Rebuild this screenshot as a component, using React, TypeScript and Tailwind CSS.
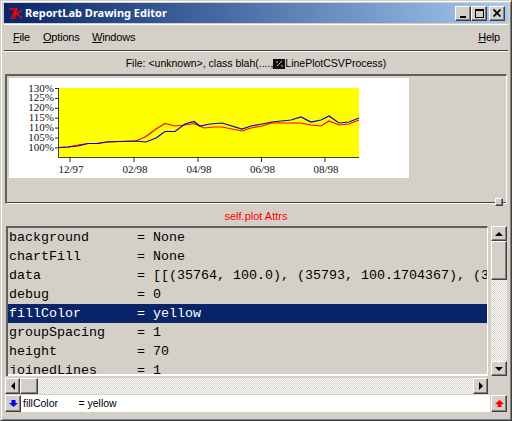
import type { ReactNode } from "react";

const raised = "border border-t-white border-l-white border-r-[#404040] border-b-[#404040] bg-[#d4d0c8] shadow-[inset_-1px_-1px_0_#808080]";
const dither = "bg-[repeating-conic-gradient(#d4d0c8_0_25%,#ffffff_0_50%)] bg-[length:2px_2px]";

const rows = [
  { name: "background", value: "None" },
  { name: "chartFill", value: "None" },
  { name: "data", value: "[[(35764, 100.0), (35793, 100.1704367), (3" },
  { name: "debug", value: "0" },
  { name: "fillColor", value: "yellow", selected: true },
  { name: "groupSpacing", value: "1" },
  { name: "height", value: "70" },
  { name: "joinedLines", value: "1" },
];

const blueLine = "59,147.5 68,147 78,146 88,143.5 97,143.5 107,142 117,141.5 136,141 146,142 156,138 165,131.5 175,131.5 185,124 194,121.5 200,126 210,124 222,123 242,129 251,126 262,124 272,122 291,120 301,117 311,122 321,120 329,116 339,123 349,122 359,118";
const redLine = "59,147.5 68,147 78,145 88,143.5 97,143.5 107,142 136,141 146,136.5 156,129 165,123.5 175,126 185,125 194,123.5 204,128 214,127 222,127 242,131 251,128 262,126 272,123 291,123 301,123 311,125 321,126 329,121 339,125 349,124 359,120";

function Chart() {
  const yLabels = ["130%", "125%", "120%", "115%", "110%", "105%", "100%"];
  const xLabels = [
    { x: 70, label: "12/97" },
    { x: 134, label: "02/98" },
    { x: 198, label: "04/98" },
    { x: 261.5, label: "06/98" },
    { x: 325, label: "08/98" },
  ];
  return (
    <svg width="400" height="100" viewBox="9 78 400 100" className="block bg-white">
      <rect x="59" y="88" width="300" height="69" fill="#ffff00" />
      <path d="M58.5 88V157.5H359" stroke="#404020" strokeWidth="1" fill="none" />
      {yLabels.map((label, i) => (
        <g key={label}>
          <line x1="55" x2="59" y1={88.5 + i * 9.9} y2={88.5 + i * 9.9} stroke="#202020" />
          <text x="54" y={91.5 + i * 9.9} textAnchor="end" fontSize="11" fontFamily="'Liberation Serif', serif" fill="#111">
            {label}
          </text>
        </g>
      ))}
      {xLabels.map((t) => (
        <g key={t.label}>
          <line x1={t.x} x2={t.x} y1="157" y2="162" stroke="#202020" />
          <text x={t.x + 1} y="173" textAnchor="middle" fontSize="11" fontFamily="'Liberation Serif', serif" fill="#111">
            {t.label}
          </text>
        </g>
      ))}
      <polyline points={redLine} fill="none" stroke="#ff0000" strokeWidth="1.2" />
      <polyline points={blueLine} fill="none" stroke="#0000e0" strokeWidth="1.2" />
    </svg>
  );
}

function SmallButton({ className, children }: { className: string; children?: ReactNode }) {
  return <div className={`${raised} flex items-center justify-center shrink-0 ${className}`}>{children}</div>;
}

function Arrow({ dir }: { dir: "up" | "down" | "left" | "right" }) {
  const points = {
    up: "0,6 8,6 4,2",
    down: "0,2 8,2 4,6",
    left: "6,0 6,8 2,4",
    right: "2,0 2,8 6,4",
  }[dir];
  return (
    <svg width="8" height="8" viewBox="0 0 8 8">
      <polygon points={points} fill="#000" />
    </svg>
  );
}

function FatArrow({ dir, color }: { dir: "up" | "down"; color: string }) {
  const points = dir === "up" ? "4.5,1 9,5 6.5,5 6.5,8 2.5,8 2.5,5 0,5" : "2.5,1 6.5,1 6.5,4 9,4 4.5,8 0,4 2.5,4";
  return (
    <svg width="9" height="9" viewBox="0 0 9 9">
      <polygon points={points} fill={color} />
    </svg>
  );
}

export default function App() {
  return (
    <div className="w-[512px] h-[421px] overflow-hidden bg-[#d4d0c8] border border-b-[#404040] border-r-[#404040] border-t-[#d4d0c8] border-l-[#d4d0c8] shadow-[inset_1px_1px_0_#fff,inset_-1px_-1px_0_#808080] px-[3px] pt-[2px] flex flex-col font-['Liberation_Sans',sans-serif] text-[10.5px] text-black">
      {/* title bar */}
      <div className="h-[20px] shrink-0 flex items-center pl-[4px] pr-[3px] bg-gradient-to-r from-[#0a246a] to-[#a6caf0]">
        <svg width="16" height="13" viewBox="0 0 16 13" className="shrink-0">
          <path d="M1 2H8L3 12M9 1L6 12M14 3L9 7L14 11" stroke="#ff0000" strokeWidth="1.6" fill="none" />
        </svg>
        <span className="ml-[1px] font-['Noto_Sans',sans-serif] font-bold text-[11px] text-white">ReportLab Drawing Editor</span>
        <div className="ml-auto flex">
          <SmallButton className="w-[16px] h-[15px] items-end pb-[2px]">
            <div className="w-[6px] h-[2px] bg-black" />
          </SmallButton>
          <SmallButton className="w-[16px] h-[15px]">
            <div className="w-[9px] h-[9px] border border-t-2 border-black" />
          </SmallButton>
          <SmallButton className="w-[16px] h-[15px] ml-[2px]">
            <svg width="8" height="8" viewBox="0 0 8 8">
              <path d="M0.5 0.5L7.5 7.5M7.5 0.5L0.5 7.5" stroke="#000" strokeWidth="1.8" />
            </svg>
          </SmallButton>
        </div>
      </div>

      {/* menu bar */}
      <div className="h-[27px] shrink-0 mt-[1px] flex items-center pl-[9px] pr-[8px] text-[11px] tracking-[-0.2px] border-t border-t-white border-b border-b-[#404040] shadow-[0_1px_0_#fff]">
        <span className="w-[30px]"><u>F</u>ile</span>
        <span className="w-[49px]"><u>O</u>ptions</span>
        <span><u>W</u>indows</span>
        <span className="ml-auto"><u>H</u>elp</span>
      </div>

      <div className="h-[23px] shrink-0 flex items-center justify-center pt-[3px]">
        File: &lt;unknown&gt;, class blah(....,
        <svg width="12" height="10" viewBox="0 0 12 10" className="shrink-0">
          <rect width="12" height="10" fill="#101010" />
          <path d="M4 7L9 2M3 3H5M8 7H10" stroke="#c0c0c0" strokeWidth="1" />
        </svg>
        LinePlotCSVProcess)
      </div>

      {/* canvas pane */}
      <div className="relative h-[130px] shrink-0 mx-[1px] border-t-2 border-l-2 border-t-[#606060] border-l-[#606060] border-r border-b border-r-white border-b-white">
        <div className="pl-[2px] pt-[2px]">
          <Chart />
        </div>
        <div className="absolute left-0 right-0 bottom-0 h-[1px] bg-[#404040]" />
        <div className={`${raised} absolute right-[3px] bottom-[-3px] w-[8px] h-[8px]`} />
      </div>

      {/* attrs label */}
      <div className="h-[22px] shrink-0 flex items-center justify-center pt-[2px] text-[11px] text-[#ff0000]">self.plot Attrs</div>

      {/* attrs list */}
      <div className="flex h-[152px] shrink-0 pl-[2px]">
        <div className="w-[482px] h-[150px] flex flex-col border-t-2 border-l-2 border-t-[#606060] border-l-[#606060] border-r border-r-white">
          <div className="flex-1 overflow-hidden font-['Liberation_Mono',monospace] text-[13.33px] leading-[19px] border-b-2 border-b-white">
            {rows.map((row) => (
              <div key={row.name} className={`h-[19px] pl-[1px] whitespace-pre ${row.selected ? "bg-[#0a246a] text-white" : ""}`}>
                {row.name.padEnd(16, " ")}= {row.value}
              </div>
            ))}
          </div>
        </div>
        <div className="ml-[3px] w-[16px] h-[150px] flex flex-col">
          <SmallButton className="w-[16px] h-[15px]"><Arrow dir="up" /></SmallButton>
          <SmallButton className="w-[16px] h-[39px]" />
          <div className={`flex-1 ${dither}`} />
          <SmallButton className="w-[16px] h-[15px]"><Arrow dir="down" /></SmallButton>
        </div>
      </div>

      {/* horizontal scrollbar */}
      <div className="h-[16px] w-[483px] shrink-0 ml-[1px] flex">
        <SmallButton className="w-[15px] h-[16px]"><Arrow dir="left" /></SmallButton>
        <SmallButton className="w-[18px] h-[16px]" />
        <div className={`flex-1 ${dither}`} />
        <SmallButton className="w-[15px] h-[16px]"><Arrow dir="right" /></SmallButton>
      </div>

      {/* input row */}
      <div className="h-[17px] shrink-0 mt-[1px] mx-[1px] flex">
        <SmallButton className="w-[16px] h-[17px]"><FatArrow dir="down" color="#0000ff" /></SmallButton>
        <div className="flex-1 bg-white whitespace-pre pl-[2px] leading-[17px]">fillColor       = yellow</div>
        <SmallButton className="w-[16px] h-[17px] ml-[1px]"><FatArrow dir="up" color="#ff0000" /></SmallButton>
      </div>
    </div>
  );
}
